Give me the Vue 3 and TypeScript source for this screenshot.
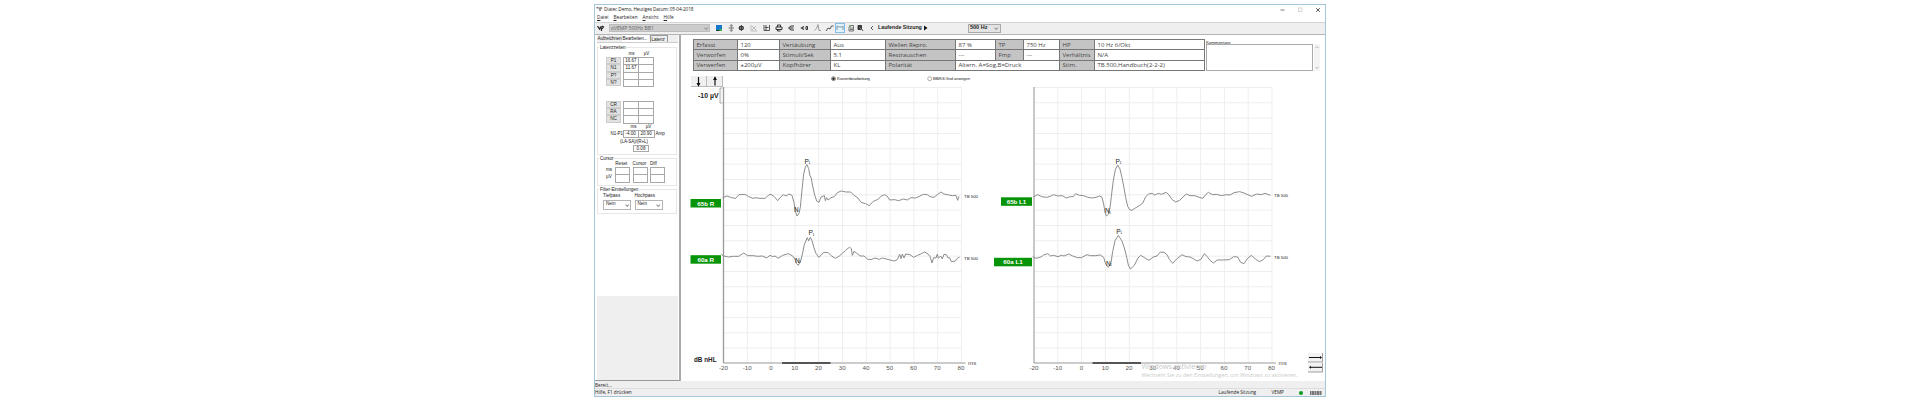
<script setup lang="ts">
interface Trace { points: string; ox: number; oy: number }
interface Mark { x: number; y: number; t: string; s: string }
interface Badge { x: number; y: number; w: number; t: string }

const latA = [
  { n: 'P1', a: '16.67' }, { n: 'N1', a: '11.67' }, { n: 'P?', a: '' }, { n: 'N?', a: '' },
]
const latB = ['CR', 'RA', 'NC']
const ticks = Array.from({ length: 11 }, (_, i) => i)
const rows = Array.from({ length: 18 }, (_, i) => i)
const plots = [723.5, 1034]

const traces: Trace[] = [
  { ox: 680, oy: 80, points: '128,353 141,348 155,353 167,355 177,344 195,343 206,350 219,355 228,353 237,355 256,355 266,345 273,343 283,350 293,362 303,350 310,344 318,348 327,342 336,346 342,368 347,396 351,408 357,400 361,382 366,330 371,282 376,261 381,254 386,266 390,288 393,291 398,318 404,345 410,363 417,367 423,351 433,347 436,362 440,353 444,360 453,353 463,350 472,338 484,333 498,336 512,336 522,346 534,354 543,367 557,371 568,377 580,364 594,358 604,348 614,344 622,349 629,360 644,359 656,362 670,357 682,360 693,353 707,354 718,349 730,343 742,344 750,350 762,352 772,344 783,336 792,342 806,345 817,347 828,346 833,361 837,349' },
  { ox: 680, oy: 220, points: '124,103 131,108 145,111 160,109 176,109 191,99 203,107 219,107 233,109 247,108 260,114 270,106 278,110 285,108 294,115 308,106 325,101 338,108 345,117 350,131 355,136 362,123 368,99 373,73 382,53 386,63 391,52 396,62 402,84 408,100 416,112 424,105 431,97 445,98 455,108 466,115 477,109 488,99 497,92 502,86 509,82 514,86 517,106 522,94 529,99 541,108 552,108 562,117 573,119 585,114 598,118 607,114 619,117 630,120 642,123 652,119 659,103 663,116 667,102 672,114 677,102 690,104 701,112 713,106 724,101 734,96 744,102 750,109 756,129 761,113 768,114 772,102 775,115 782,108 787,117 792,103 799,104 804,114 809,113 814,125 826,123 832,115 839,111' },
  { ox: 990, oy: 80, points: '129,351 143,344 155,350 170,352 181,349 191,344 203,348 217,347 229,354 241,350 250,350 257,341 268,346 281,347 293,352 306,354 318,352 329,348 336,352 341,372 345,397 349,408 355,403 360,383 364,350 370,301 376,269 383,255 390,267 396,293 402,323 407,353 413,379 419,389 426,391 436,384 448,377 458,370 467,350 476,342 486,340 494,345 505,340 514,343 529,337 537,345 547,359 557,366 569,361 579,351 589,342 600,347 614,347 625,351 638,355 648,343 655,337 667,344 680,343 694,347 709,344 720,345 732,338 749,335 762,339 773,344 785,349 800,342 814,344 825,340 841,346' },
  { ox: 990, oy: 220, points: '128,110 138,115 153,111 161,105 173,101 182,108 191,106 204,110 214,106 222,108 236,102 248,108 262,113 274,113 291,104 301,107 317,107 331,105 341,112 347,132 355,142 363,128 368,95 375,62 385,46 396,63 403,84 409,107 415,135 421,147 433,136 444,114 452,106 465,114 477,121 490,111 501,108 511,96 522,97 531,104 538,118 548,130 560,117 570,109 576,104 588,110 600,111 610,116 621,123 633,118 643,101 651,109 660,121 670,129 682,120 697,120 718,119 731,110 743,111 752,127 762,131 773,115 784,106 795,116 808,125 820,119 829,108 841,109' },
]
const marks: Mark[] = [
  { x: 804.5, y: 163.5, t: 'P', s: '1' }, { x: 794, y: 211.5, t: 'N', s: '' },
  { x: 808.5, y: 235, t: 'P', s: '1' }, { x: 795, y: 262.5, t: 'N', s: '1' },
  { x: 1115.5, y: 163.5, t: 'P', s: '1' }, { x: 1105, y: 213, t: 'N', s: '1' },
  { x: 1116.3, y: 233.5, t: 'P', s: '1' }, { x: 1106, y: 265.5, t: 'N', s: '1' },
]
const badges: Badge[] = [
  { x: 690.5, y: 199, w: 30.5, t: '65b R' }, { x: 690.5, y: 255.2, w: 30.5, t: '60a R' },
  { x: 1001, y: 197.3, w: 31, t: '65b L1' }, { x: 994, y: 257.8, w: 38, t: '60a L1' },
]
const runLabels = [[964, 197.8], [964, 260], [1274, 197], [1274, 259]]
</script>

<template>
  <div class="page">
    <div class="window">
      <header class="title">
        <svg class="logo" viewBox="0 0 8 7"><path d="M1 2 3 1 3 3M4 1l1 4 1-4 1 2" /></svg>
        <span>Diatec Demo, Heutiges Datum: 05-04-2018</span>
        <svg class="winbtns" viewBox="0 0 44 8">
          <path d="M2.500 4h4" stroke="#555" stroke-width=".8" /><rect x="20.500" y="2" width="3.500" height="3.500" fill="none" stroke="#bbb" stroke-width=".6" />
          <path d="M38.200 2.200l3.600 3.600M41.800 2.200l-3.600 3.600" stroke="#444" stroke-width=".9" />
        </svg>
      </header>
      <nav class="menu"><span><u>D</u>atei</span><span><u>B</u>earbeiten</span><span><u>A</u>nsicht</span><span><u>H</u>ilfe</span></nav>
      <div class="toolbar">
        <svg class="probe" viewBox="0 0 8 7"><path d="M.5 1l2 3 1-2M4 1l.5 5M5 1l1.500 1L5 4" /></svg>
        <div class="protocol"><span>oVEMP 500Hz BB1</span><i class="chev"></i></div>
        <svg class="icons" viewBox="0 0 140 12">
          <rect x="5" y="3" width="6" height="5" fill="#1878c8" /><path d="M5 8h6v1H5z" fill="#1b3f2b" /><path d="M8.500 7h2.500v2H8.500z" fill="#43ae54" />
          <g fill="none" stroke="#333" stroke-width="1">
            <path d="M17.500 6h5.500M20.300 3v6" stroke="#777" /><path d="M20.300 2l1.500 2h-3zM20.300 10l1.500-2h-3z" stroke="#777" stroke-width=".5" />
            <path d="M27.500 6h5.500M30.300 3v6M28.500 4.500h3.600v3h-3.600z" />
            <path d="M40 3v6h6M41 4l4 4M41 8l4-4" stroke="#bbb" />
            <path d="M53 3v5.500h5.500V3M54 5.500h3.500M55 3v5" stroke="#555" />
            <path d="M65 7.500V5h6v2.500h-6M66.500 5V3h3v2M66.500 8v1h3" />
            <path d="M83 4h-3l-2.500 2 2.500 2h3M78.500 6h4" />
            <path d="M93 4.500l-2.500 1.500 2.500 1.500" stroke-width="1.200" /><path d="M95 4.500v3h1.500v-3z" />
            <path d="M103.500 8.500l2-2 1.500-4 1 6h2" stroke="#999" />
            <path d="M115 9l2-3 2 1 1.500-3h2" stroke="#555" />
          </g>
          <rect x="124.500" y="1.500" width="9" height="9" fill="#e3f1fb" stroke="#80bce8" /><path d="M126 8V4l2 1h3l1-1v4" fill="none" stroke="#6688a0" stroke-width=".8" />
        </svg>
        <svg class="icons2" viewBox="0 0 22 12"><path d="M3 9V5l2-1.500h2.500V9zM4 6h3M4 7.500h3" fill="none" stroke="#555" stroke-width=".8" /><path d="M3 3.500l2 1" stroke="#43ae54" /><path d="M12 3.500h3.500v3.500l1.500 2M12 3.500v4h3" fill="#333" stroke="#222" stroke-width=".8" /></svg>
        <svg class="arr" viewBox="0 0 6 8"><path d="M4 2 2 4l2 2" fill="none" stroke="#333" stroke-width=".8" /></svg>
        <b class="session">Laufende Sitzung</b>
        <svg class="arr" viewBox="0 0 6 8"><path d="M1 1.500 4.500 4 1 6.500z" fill="#111" /></svg>
        <div class="freq"><b>500 Hz</b><i class="chev"></i></div>
      </div>
      <div class="body">
        <aside class="side">
          <div class="tabs"><span>Aufzeichnen</span><span class="on">Bearbeiten...</span><span class="box">Latenz</span></div>
          <fieldset class="g1">
            <legend>Latenzzeiten</legend>
            <div class="heads h1"><span>ms</span><span>µV</span></div>
            <div class="lat"><template v-for="r in latA" :key="r.n"><em>{{ r.n }}</em><i>{{ r.a }}</i><i></i></template></div>
            <div class="lat second"><template v-for="r in latB" :key="r"><em>{{ r }}</em><i></i><i></i></template></div>
            <div class="heads h2"><span>ms</span><span>µV</span></div>
            <div class="amp"><span>N1-P1</span><i>-4.00</i><i>20.90</i><span>Amp</span></div>
            <div class="ratio">(LA-SA)/(R+L)</div>
            <div class="ratioval">0.08</div>
          </fieldset>
          <fieldset class="g2">
            <legend>Cursor</legend>
            <div class="cur">
              <span></span><span>Reset</span><span>Cursor</span><span>Diff</span>
              <span>ms</span><i></i><i></i><i></i>
              <span>µV</span><i></i><i></i><i></i>
            </div>
          </fieldset>
          <fieldset class="g3">
            <legend>Filter-Einstellungen</legend>
            <div class="filters">
              <span>Tiefpass</span><span>Hochpass</span>
              <div class="sel">Nein<i class="chev"></i></div><div class="sel">Nein<i class="chev"></i></div>
            </div>
          </fieldset>
          <div class="empty"></div>
        </aside>
        <main class="main">
          <div class="info">
            <table>
              <colgroup><col style="width:44px"><col style="width:42px"><col style="width:51px"><col style="width:55px"><col style="width:70px"><col style="width:40px"><col style="width:28px"><col style="width:36px"><col style="width:35px"><col style="width:110px"></colgroup>
              <tbody>
                <tr><th>Erfasst</th><td>120</td><th>Vertäubung</th><td>Aus</td><th>Wellen Repro.</th><td>87 %</td><th>TP</th><td>750 Hz</td><th>HP</th><td>10 Hz 6/Okt</td></tr>
                <tr><th>Verworfen</th><td>0%</td><th>Stimuli/Sek</th><td>5.1</td><th>Restrauschen</th><td>---</td><th>Fmp</th><td>---</td><th>Verhältnis</th><td>N/A</td></tr>
                <tr><th>Verwerfen</th><td>±200µV</td><th>Kopfhörer</th><td>KL</td><th>Polarität</th><td colspan="3">Altern. A=Sog,B=Druck</td><th>Stim.</th><td>TB.500,Handbuch(2-2-2)</td></tr>
              </tbody>
            </table>
            <div class="comment"><span>Kommentare</span><div class="area"></div></div>
            <svg class="scroll" viewBox="0 0 6 27"><rect width="6" height="27" fill="#f4f4f4" /><path d="M1.500 4 3 2.500 4.500 4M1.500 23 3 24.500 4.500 23" fill="none" stroke="#999" stroke-width=".7" /></svg>
          </div>
          <svg class="plot" width="643" height="309" viewBox="681 72 643 309">
            <g fill="#f0f0f0"><rect x="691" y="76" width="15" height="10.500" /><rect x="707" y="76" width="15" height="10.500" /></g>
            <path d="M691 86.500h32M706.500 76v10M722.500 76v10" stroke="#aaa" stroke-width=".8" />
            <g stroke="#111" stroke-width="1.200" fill="#111"><path d="M698.500 77v8" /><path d="M698.500 85.500l-1-2h2zM715 77.500l-1 2h2z" /><path d="M715 77.500v8" /></g>
            <circle cx="833.500" cy="78.700" r="2" fill="#fff" stroke="#555" stroke-width=".7" /><circle cx="833.500" cy="78.700" r="1.200" fill="#111" />
            <text x="837" y="80.400" font-size="4.300" textLength="33" class="tx dark">Kurvenbearbeitung</text>
            <circle cx="929.700" cy="78.700" r="2" fill="#fff" stroke="#777" stroke-width=".6" />
            <text x="933" y="80.400" font-size="4.200" textLength="37" class="tx dark">BB/KS Graf anzeigen</text>

            <g v-for="(px, k) in plots" :key="k">
              <path v-for="r in rows" :key="'r' + r" class="grid" :d="`M${px} ${87.5 + r * 15.33}h238.500`" />
              <path v-for="t in ticks" :key="'t' + t" class="grid" :d="`M${px + t * 23.8} 87.500v275.500`" />
              <path :d="`M${px} 87v276`" stroke="#999" :stroke-width="k ? 1 : 1.300" />
              <path :d="`M${px} 363h242`" stroke="#999" stroke-width="1" />
              <path :d="`M${px + 58.500} 363h48.500`" stroke="#555" stroke-width="1.800" />
              <text v-for="t in ticks" :key="'x' + t" :x="px + t * 23.75" y="370" class="ax" text-anchor="middle">{{ t * 10 - 20 }}</text>
              <text :x="px + 244.500" y="365.200" class="ax">ms</text>
            </g>
            <path d="M722.500 88h-2.500v15h2.500" fill="#f5f5f5" stroke="#999" stroke-width=".8" />
            <text x="698" y="97.800" font-size="6.500" font-weight="bold" textLength="20.500" lengthAdjust="spacingAndGlyphs" class="tx dark">-10 µV</text>
            <text x="694" y="361.800" font-size="6.500" font-weight="bold" textLength="22.500" lengthAdjust="spacingAndGlyphs" class="tx dark">dB nHL</text>

            <polyline v-for="(c, i) in traces" :key="i" class="trace" :points="c.points" :transform="`translate(${c.ox} ${c.oy}) scale(.33333)`" />
            <g v-for="(m, i) in marks" :key="'m' + i">
              <text :x="m.x" :y="m.y" font-size="6.500" class="tx dark">{{ m.t }}</text>
              <text :x="m.x + 3.900" :y="m.y + .8" font-size="3.500" class="tx dark">{{ m.s }}</text>
            </g>
            <g v-for="(b, i) in badges" :key="'b' + i">
              <rect :x="b.x" :y="b.y" :width="b.w" height="8.500" fill="#089408" />
              <text :x="b.x + b.w / 2" :y="b.y + 6.600" font-size="6.200" font-weight="bold" text-anchor="middle" class="tx light">{{ b.t }}</text>
            </g>
            <text v-for="(l, i) in runLabels" :key="'l' + i" :x="l[0]" :y="l[1]" font-size="4.400" textLength="14" class="tx dark">TB 500</text>

            <text x="1141.500" y="368.500" font-size="7.200" textLength="65" class="tx ghost">Windows aktivieren</text>
            <text x="1141.500" y="376.600" font-size="5.300" textLength="156" class="tx ghost">Wechseln Sie zu den Einstellungen, um Windows zu aktivieren.</text>
            <g fill="#f2f2f2"><rect x="1308" y="353" width="14.500" height="9" /><rect x="1308" y="363" width="14.500" height="9" /></g>
            <path d="M1308 362h14.500V353M1308 372h14.500V363" fill="none" stroke="#888" stroke-width=".8" />
            <path d="M1309 357.500h12M1310 367.300h12" stroke="#111" stroke-width="1" /><path d="M1322 357.500l-2-1.500v3zM1309 367.300l2-1.500v3z" fill="#111" />
          </svg>
        </main>
      </div>
      <div class="ready">Bereit...</div>
      <footer class="status"><span>Hilfe, F1 drücken</span><span class="s1">Laufende Sitzung</span><span class="s2">VEMP</span><i class="led"></i><i class="bars"></i></footer>
    </div>
  </div>
</template>

<style>
body { background: #fff; }
</style>
<style scoped>
* { box-sizing: border-box; }
.page { width: 1920px; height: 400px; padding: 4px 0 0 594px; overflow: hidden; background: #fff; font-family: "Open Sans", "Noto Sans", sans-serif; color: #222; font-size: 4.700px; line-height: 1; }
.window { width: 732px; height: 393px; border: 1px solid #a3c6da; display: flex; flex-direction: column; background: #fff; white-space: nowrap; }
.title { height: 9px; display: flex; align-items: center; flex: none; }
.logo { width: 8px; height: 7px; fill: none; stroke: #555; stroke-width: .7; }
.title span { margin-left: 1px; letter-spacing: -.09px; }
.winbtns { width: 44px; height: 8px; margin-left: auto; margin-right: 3px; }
.menu { height: 7.500px; display: flex; align-items: center; gap: 5px; padding-left: 2px; flex: none; }
.menu u { text-decoration-thickness: .5px; }
.toolbar { height: 13px; flex: none; display: flex; align-items: center; background: #efefef; border-top: 1px solid #d4d4d4; border-bottom: 1px solid #b5b5b5; }
.probe { width: 8px; height: 7px; margin-left: 2px; fill: none; stroke: #222; stroke-width: 1.200; }
.protocol { width: 101px; height: 8.500px; margin-left: 4px; background: #ccc; border: .5px solid #bcbcbc; display: flex; align-items: center; justify-content: space-between; padding: 0 2px 0 1px; color: #666; font-size: 5px; }
.chev { width: 2.500px; height: 2.500px; border-right: 1px solid #999; border-bottom: 1px solid #999; transform: translateY(-.7px) rotate(45deg); display: block; }
.icons { width: 140px; height: 12px; margin-left: 1px; }
.icons2 { width: 22px; height: 12px; margin-left: -5px; }
.arr { width: 6px; height: 8px; margin-left: 1px; flex: none; }
.session { font-family: "Liberation Sans", sans-serif; font-size: 5.300px; margin-left: 3px; margin-right: 1px; color: #222; width: 43px; letter-spacing: -.02px; }
.freq { width: 33px; height: 9px; margin-left: 39px; border: .5px solid #aaa; background: #e4e4e4; display: flex; align-items: center; justify-content: space-between; padding: 0 3px 0 1px; font-family: "Liberation Sans", sans-serif; font-size: 5.500px; }
.body { flex: 1; min-height: 0; display: flex; }
.side { width: 86px; border-right: 2px solid #aaa; border-bottom: 1px solid #999; padding: 0 1px 0 2px; display: flex; flex-direction: column; flex: none; font-family: "Liberation Sans", sans-serif; font-size: 4.600px; }
.tabs { height: 8.500px; display: flex; background: #efefef; border-bottom: .5px solid #ccc; align-items: stretch; line-height: 8.500px; }
.tabs span { width: 25px; letter-spacing: -.1px; padding-left: .5px; }
.tabs .on { background: #fff; width: 27px; }
.tabs .box { width: 18px; margin-left: 1px; border: .5px solid #999; border-bottom: 0; line-height: 7px; }
fieldset { margin: 0; padding: 0; border: 1px solid #e6e6e6; min-width: 0; width: 80px; position: relative; flex: none; }
legend { padding: 0 1px; margin-left: 1px; line-height: 5px; height: 5px; letter-spacing: -.05px; }
.g1 { height: 110px; margin-top: 1.500px; }
.g2 { height: 30px; margin-top: 1.500px; }
.g3 { height: 26.500px; margin-top: 1px; }
.heads { display: grid; grid-template-columns: 15px 15px; padding-left: 26px; text-align: center; height: 5px; }
.h1 { margin-top: 2.500px; }
.h2 { margin-top: 2.500px; padding-left: 28px; }
.lat { display: grid; grid-template-columns: 17px 15px 15px; padding-left: 8px; grid-auto-rows: 7.300px; }
.second { margin-top: 14.500px; }
.lat em { font-style: normal; background: #e2e2e2; border: .5px solid #ccc; margin-right: 2px; text-align: center; line-height: 6.800px; }
i { font-style: normal; }
.lat i, .amp i, .cur i { border: 1px solid #a8a8a8; background: #fff; line-height: 5.500px; text-align: center; font-size: 4.500px; margin-right: -1px; }
.lat i { margin-bottom: -1px; }
.amp { display: grid; grid-template-columns: 12px 15.500px 15.500px 10px; padding-left: 12.500px; height: 7px; line-height: 7px; }
.amp span { letter-spacing: -.1px; }
.amp span:last-child { padding-left: 2px; }
.ratio { padding-left: 22px; margin-top: 2px; height: 5px; line-height: 5px; letter-spacing: -.1px; }
.ratioval { margin: .5px 0 0 35px; width: 16px; height: 7.500px; border: 1px solid #a8a8a8; text-align: center; line-height: 5.800px; }
.cur { display: grid; grid-template-columns: 7px 15px 15px 15px; column-gap: 2.300px; grid-template-rows: 5.500px 7.500px 7.500px; padding-left: 8px; line-height: 6px; }
.cur i { margin: 0 0 -1px; }
.filters { display: grid; grid-template-columns: 28px 28px; column-gap: 3.500px; grid-template-rows: 8px 9.500px; padding-left: 5px; align-items: center; }
.sel { height: 9.500px; border: 1px solid #b4b4b4; display: flex; align-items: center; justify-content: space-between; padding: 0 2px; }
.empty { margin-top: auto; height: 84.500px; background: #efefef; }
.main { flex: 1; min-width: 0; display: flex; flex-direction: column; }
.info { display: flex; height: 37.500px; padding: 4.500px 0 0 12px; flex: none; }
table { width: 511px; height: 31px; border-collapse: collapse; table-layout: fixed; flex: none; font-size: 6px; color: #444; }
th, td { border: 1px solid #777; padding: 0 0 0 2.500px; text-align: left; font-weight: normal; height: 10.300px; line-height: 8px; overflow: hidden; }
th { background: #c4c4c4; }
.comment { width: 107px; margin-left: 1px; font-family: "Liberation Sans", sans-serif; font-size: 4.300px; padding-top: .5px; }
.comment .area { height: 27px; border: 1px solid #aaa; margin-top: -.500px; }
.comment span { display: block; height: 4.500px; line-height: 5px; }
.scroll { width: 6px; height: 27px; margin: 5px 0 0 1px; }
.plot { display: block; flex: none; }
.tx { font-family: "Liberation Sans", Arial, sans-serif; fill: #444; }
.dark { fill: #222; }
.light { fill: #fff; }
.ghost { fill: #c8c8c8; font-family: "Open Sans", sans-serif; }
.ax { font-family: "Liberation Sans", Arial, sans-serif; font-size: 6.200px; fill: #555; }
.grid { fill: none; stroke: #eee; stroke-width: 1; }
.trace { fill: none; stroke: #888; stroke-width: 2.900; stroke-linejoin: round; }
.ready { height: 8px; flex: none; background: #efefef; border-bottom: 1px solid #ddd; line-height: 8.500px; }
.status { height: 7px; flex: none; background: #efefef; display: flex; align-items: center; padding-right: 3px; }
.s1 { margin-left: auto; width: 53px; }
.s2 { width: 27px; }
.led { width: 4.500px; height: 4px; border-radius: 2px; background: #0a9a20; margin-right: 7px; }
.bars { width: 12px; height: 4px; background: repeating-linear-gradient(90deg, #777 0 1.500px, #aaa 1.500px 2.500px); }
</style>
